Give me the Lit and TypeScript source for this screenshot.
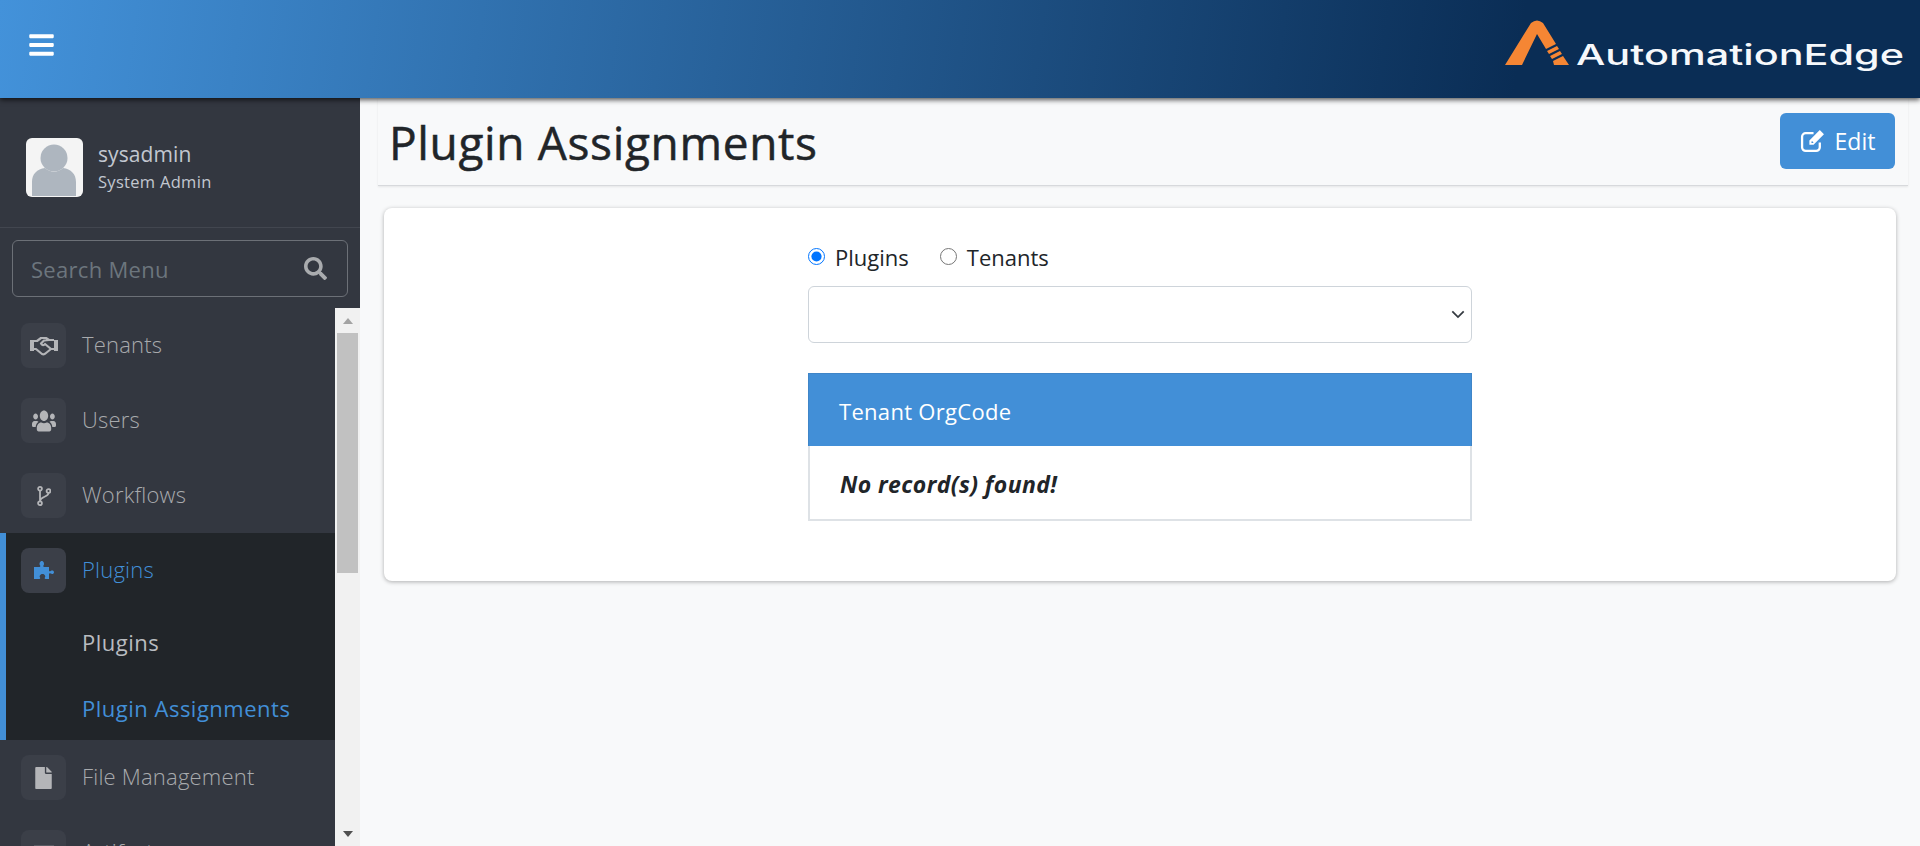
import { LitElement, html, css, svg } from 'lit'
import { customElement } from 'lit/decorators.js'
import { classMap } from 'lit/directives/class-map.js'

const icons = {
  handshake: svg`<svg viewBox="0 0 28 20" width="28" height="20"><path fill="currentColor" d="M0 4h4v11H0zM24 4h4v11h-4z"/><path fill="none" stroke="currentColor" stroke-width="2.2" stroke-linejoin="round" d="M4 5h3l4-3h5l3 2h5M4 13h2l6 5c2 1 3 0 4-1l5-4h3M19 4l-5 .5-3 3c1 2 3 2 4 .5l6 5"/></svg>`,
  users: svg`<svg viewBox="0 0 640 512" width="24" height="24" preserveAspectRatio="none"><path fill="currentColor" d="M96 224c35.3 0 64-28.7 64-64s-28.7-64-64-64-64 28.7-64 64 28.7 64 64 64zm448 0c35.3 0 64-28.7 64-64s-28.7-64-64-64-64 28.7-64 64 28.7 64 64 64zm32 32h-64c-17.6 0-33.5 7.1-45.1 18.6 40.3 22.1 68.9 62 75.1 109.4h66c17.7 0 32-14.3 32-32v-32c0-35.3-28.7-64-64-64zm-256 0c61.9 0 112-50.1 112-112S381.9 32 320 32 208 82.1 208 144s50.1 112 112 112zm76.8 32h-8.3c-20.8 10-43.9 16-68.5 16s-47.6-6-68.5-16h-8.3C179.6 288 128 339.6 128 403.2V432c0 26.5 21.5 48 48 48h288c26.5 0 48-21.5 48-48v-28.8c0-63.6-51.6-115.2-115.2-115.2zm-223.7-13.4C161.5 263.1 145.6 256 128 256H64c-35.3 0-64 28.7-64 64v32c0 17.7 14.3 32 32 32h65.9c6.3-47.4 34.9-87.3 75.2-109.4z"/></svg>`,
  fork: svg`<svg viewBox="0 0 14 20" width="14" height="20"><g fill="none" stroke="currentColor" stroke-width="1.8"><circle cx="3" cy="2.8" r="1.9"/><circle cx="3" cy="17.2" r="1.9"/><circle cx="11.5" cy="5" r="1.9"/><path d="M3 4.7v10.6M11.5 7c0 4-8 3.500-8.500 8"/></g></svg>`,
  puzzle: svg`<svg viewBox="0 0 20 20" width="20" height="20"><path fill="currentColor" d="M0 6h5.500c1 0 1-1 .5-1.700C4.900 2.800 6 0 7.800 0s2.900 2.800 1.800 4.300c-.5.700-.5 1.700.5 1.700H15v3.500c0 1 1 1 1.700.5 1.500-1 3.300-.3 3.300 1.300s-1.800 2.300-3.300 1.300c-.7-.5-1.700-.5-1.700.5V18h-3.500c-1 0-1-1-.5-1.700.9-1.300-.5-3.300-2.500-3.300S5 15 5.900 16.300c.5.700.5 1.700-.5 1.700H0z"/></svg>`,
  file: svg`<svg viewBox="0 0 384 512" width="19" height="22"><path fill="currentColor" d="M224 136V0H24C10.700 0 0 10.700 0 24v464c0 13.300 10.700 24 24 24h336c13.300 0 24-10.700 24-24V160H248c-13.200 0-24-10.800-24-24zm160-14.100v6.100H256V0h6.100c6.400 0 12.500 2.500 17 7l97.900 98c4.500 4.500 7 10.600 7 16.900z"/></svg>`,
  archive: svg`<svg viewBox="0 0 22 20" width="20" height="20"><path fill="currentColor" d="M0 2h22v5H0zM1.500 8.500h19V20h-19z"/></svg>`,
}

const menu = [
  { label: 'Tenants', icon: icons.handshake },
  { label: 'Users', icon: icons.users },
  { label: 'Workflows', icon: icons.fork },
  { label: 'Plugins', icon: icons.puzzle, active: true },
  { label: 'File Management', icon: icons.file },
  { label: 'Artifacts', icon: icons.archive },
]

@customElement('app-root')
export class AppRoot extends LitElement {
  static styles = css`
    :host {
      display: block;
      height: 846px;
      overflow: hidden;
      font-family: 'Open Sans', 'Liberation Sans', sans-serif;
      color: #212529;
      background: #f8f9fa;
    }
    * { box-sizing: border-box; }

    .topbar {
      position: relative;
      z-index: 2;
      height: 98px;
      display: flex;
      align-items: center;
      justify-content: space-between;
      padding: 0 15px 8px 29px;
      background: linear-gradient(98deg, #4392da 0%, #0a2d55 79%);
      box-shadow: 0 2px 5px rgba(0, 0, 0, 0.65);
    }
    .burger { display: block; color: #fff; }
    .logo { display: block; margin-top: 2px; }
    .logo text { font-family: Inter, sans-serif; font-weight: 500; font-size: 28px; fill: #f6f8fb; }

    .shell { display: flex; height: 748px; }

    .sidebar {
      width: 360px;
      flex: none;
      display: flex;
      flex-direction: column;
      background: #333740;
      overflow: hidden;
    }
    .user {
      height: 130px;
      flex: none;
      display: flex;
      align-items: center;
      gap: 15px;
      padding: 9px 0 0 26px;
      border-bottom: 1px solid #42464f;
    }
    .avatar { display: block; flex: none; }
    .name { font-size: 21px; line-height: 28px; color: #c2c7d0; letter-spacing: 0.1px; }
    .role { font-size: 16.500px; line-height: 27px; color: #c2c7d0; letter-spacing: 0.3px; }
    .search {
      flex: none;
      height: 57px;
      margin: 12px 12px 11px 12px;
      padding: 0 20px 0 18px;
      display: flex;
      align-items: center;
      justify-content: space-between;
      border: 1px solid #6c7077;
      border-radius: 6px;
      font-size: 22px;
      letter-spacing: 0.3px;
      color: #6c757d;
    }
    .search svg { display: block; color: #a9abae; }

    .scroller { flex: 1; min-height: 0; display: flex; }
    .nav { flex: 1; min-width: 0; overflow: hidden; }
    .item {
      height: 75px;
      display: flex;
      align-items: center;
      gap: 16px;
      padding-left: 21px;
      font-size: 22px;
      font-weight: 300;
      letter-spacing: 0.2px;
      color: #a8aaad;
    }
    .label { margin-bottom: 4px; }
    .tile {
      width: 45px;
      height: 45px;
      flex: none;
      display: flex;
      align-items: center;
      justify-content: center;
      border-radius: 8px;
      background: #3b3f48;
      color: #b4b5b8;
    }
    .tile svg { display: block; }
    .group { background: #212529; border-left: 6px solid #428fd7; }
    .group .item { padding-left: 15px; color: #428fd7; }
    .group .tile { color: #428fd7; }
    .sub {
      height: 66px;
      display: flex;
      align-items: center;
      padding: 2px 0 0 76px;
      font-size: 22px;
      letter-spacing: 0.5px;
      color: #b9bcc0;
    }
    .sub.current { color: #428fd7; }

    .scrollbar {
      width: 25px;
      flex: none;
      display: flex;
      flex-direction: column;
      align-items: center;
      background: #f1f1f1;
    }
    .arrow { height: 25px; flex: none; display: flex; align-items: center; justify-content: center; }
    .arrow i { border-left: 5.500px solid transparent; border-right: 5.500px solid transparent; }
    .arrow.up i { border-bottom: 6px solid #a3a3a3; }
    .arrow.down i { border-top: 6px solid #505050; }
    .thumb { width: 21px; height: 240px; flex: none; background: #c1c1c1; }
    .track { flex: 1; }

    .main { flex: 1; min-width: 0; padding: 0 12px 0 18px; }
    .pagehead {
      height: 88px;
      display: flex;
      align-items: center;
      justify-content: space-between;
      padding: 0 13px 2px 11px;
      border-bottom: 1px solid #d7d9dc;
      box-shadow: 0 1px 2px rgba(0, 0, 0, 0.08);
    }
    h1 {
      margin: 4px 0 0;
      font-size: 46px;
      font-weight: 400;
      letter-spacing: 0.65px;
      line-height: 1.2;
      -webkit-text-stroke: 0.5px #212529;
    }
    .edit {
      width: 115px;
      height: 56px;
      display: flex;
      align-items: center;
      justify-content: center;
      gap: 10px;
      border: 0;
      border-radius: 6px;
      background: #428fd7;
      color: #fff;
      font: inherit;
      font-size: 23px;
    }
    .edit svg { display: block; }

    .card {
      margin: 22px 12px 0 6px;
      height: 373px;
      padding-top: 35px;
      background: #fff;
      border-radius: 8px;
      box-shadow: 0 1px 4px rgba(0, 0, 0, 0.3);
    }
    .form { width: 664px; margin: 0 auto; }
    .radios { height: 43px; display: flex; align-items: flex-start; font-size: 22px; line-height: 28px; }
    .radios label { display: flex; align-items: center; gap: 10px; margin-right: 31px; }
    .radios input { width: 17px; height: 17px; margin: 0 0 1px; accent-color: #0075ff; }
    .selectwrap { position: relative; height: 57px; }
    select {
      display: block;
      width: 100%;
      height: 100%;
      appearance: none;
      background: #fff;
      border: 1px solid #ced4da;
      border-radius: 6px;
    }
    .chev { position: absolute; right: 7px; top: 24px; display: block; color: #343a40; }
    table {
      width: 100%;
      margin-top: 30px;
      border-collapse: separate;
      border-spacing: 0;
      font-size: 22px;
    }
    th {
      height: 73px;
      padding: 2px 0 0 30px;
      text-align: left;
      font-weight: 400;
      letter-spacing: 0.3px;
      color: #fff;
      background: #428fd7;
      border: 1px solid #3f85c8;
      border-bottom: 0;
    }
    td {
      height: 75px;
      padding: 3px 0 0 30px;
      font-size: 23px;
      font-weight: 700;
      font-style: italic;
      letter-spacing: 0.4px;
      border: 2px solid #dee2e6;
      border-top: 0;
    }
  `

  render() {
    return html`
      <header class="topbar">
        <svg class="burger" viewBox="0 0 448 512" width="25" height="28"><path fill="currentColor" d="M16 132h416c8.837 0 16-7.163 16-16V76c0-8.837-7.163-16-16-16H16C7.163 60 0 67.163 0 76v40c0 8.837 7.163 16 16 16zm0 160h416c8.837 0 16-7.163 16-16v-40c0-8.837-7.163-16-16-16H16c-8.837 0-16 7.163-16 16v40c0 8.837 7.163 16 16 16zm0 160h416c8.837 0 16-7.163 16-16v-40c0-8.837-7.163-16-16-16H16c-8.837 0-16 7.163-16 16v40c0 8.837 7.163 16 16 16z"/></svg>
        <svg class="logo" viewBox="0 0 400 60" width="400" height="60">
          <g fill="#f58634">
            <path d="M0 49L26 7Q32 2 38 7L51 28 41 33 32 18 17 49Z"/>
            <path d="M42 35L52 30 54 33 44 38Z"/>
            <path d="M45 40L55 35 57 38 47 43Z"/>
            <path d="M48 45L58 40 64 49 49 49Z"/>
          </g>
          <text x="71" y="49" textLength="328" lengthAdjust="spacingAndGlyphs">AutomationEdge</text>
        </svg>
      </header>
      <div class="shell">
        <aside class="sidebar">
          <div class="user">
            <svg class="avatar" viewBox="0 0 57 59" width="57" height="59">
              <rect width="57" height="59" rx="6" fill="#f4f4f4"/>
              <circle cx="28" cy="20" r="13.500" fill="#aeb6bf"/>
              <path d="M6 58V44C6 36 11 31 19 30 25 35 31 35 37 30 45 31 50 36 50 44V58Z" fill="#aeb6bf"/>
            </svg>
            <div>
              <div class="name">sysadmin</div>
              <div class="role">System Admin</div>
            </div>
          </div>
          <div class="search">
            <span>Search Menu</span>
            <svg viewBox="0 0 512 512" width="23" height="23"><path fill="currentColor" d="M505 442.700L405.300 343c-4.500-4.500-10.600-7-17-7H372c27.600-35.300 44-79.700 44-128C416 93.100 322.900 0 208 0S0 93.100 0 208s93.100 208 208 208c48.300 0 92.700-16.400 128-44v16.300c0 6.400 2.500 12.500 7 17l99.700 99.700c9.400 9.400 24.600 9.400 33.900 0l28.300-28.300c9.400-9.400 9.400-24.600.1-34zM208 336c-70.700 0-128-57.200-128-128 0-70.700 57.200-128 128-128 70.700 0 128 57.200 128 128 0 70.700-57.200 128-128 128z"/></svg>
          </div>
          <div class="scroller">
            <nav class="nav">
              ${menu.map((m) =>
                m.active
                  ? html`<div class="group">
                      ${this.renderItem(m)}
                      <div class=${classMap({ sub: true })}>Plugins</div>
                      <div class=${classMap({ sub: true, current: true })}>Plugin Assignments</div>
                    </div>`
                  : this.renderItem(m),
              )}
            </nav>
            <div class="scrollbar">
              <div class="arrow up"><i></i></div>
              <div class="thumb"></div>
              <div class="track"></div>
              <div class="arrow down"><i></i></div>
            </div>
          </div>
        </aside>
        <main class="main">
          <div class="pagehead">
            <h1>Plugin Assignments</h1>
            <button class="edit">
              <svg viewBox="0 0 24 24" width="25" height="25">
                <path fill="none" stroke="currentColor" stroke-width="2.200" d="M19 14v4.500a3.500 3.500 0 0 1-3.500 3.500h-10A3.500 3.500 0 0 1 2 18.500v-10A3.500 3.500 0 0 1 5.500 5H13"/>
                <path fill="currentColor" d="M9 12L19 2l4 4-10 10H9zM11 13.500v1h1.500l.5-.5-1.500-1.500z"/>
              </svg>
              Edit
            </button>
          </div>
          <section class="card">
            <div class="form">
              <div class="radios">
                <label><input type="radio" name="kind" checked />Plugins</label>
                <label><input type="radio" name="kind" />Tenants</label>
              </div>
              <div class="selectwrap">
                <select aria-label="Plugin"></select>
                <svg class="chev" viewBox="0 0 16 10" width="14" height="9"><path fill="none" stroke="currentColor" stroke-width="2" d="M1.500 1.500L8 8l6.500-6.500"/></svg>
              </div>
              <table>
                <thead><tr><th>Tenant OrgCode</th></tr></thead>
                <tbody><tr><td>No record(s) found!</td></tr></tbody>
              </table>
            </div>
          </section>
        </main>
      </div>
    `
  }

  renderItem(m: { label: string; icon: unknown }) {
    return html`<div class="item"><span class="tile">${m.icon}</span><span class="label">${m.label}</span></div>`
  }
}
